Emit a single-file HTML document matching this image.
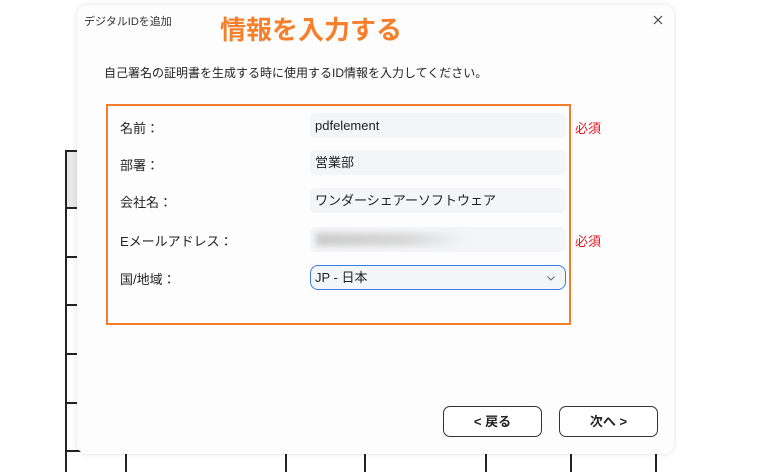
<!DOCTYPE html>
<html><head><meta charset="utf-8"><style>
body{margin:0;width:784px;height:472px;background:#fff;position:relative;overflow:hidden;font-family:"Liberation Sans","Noto Sans CJK JP",sans-serif;color:#222}
.a{position:absolute}
.vl{position:absolute;width:2px;background:#222}
.hl{position:absolute;height:2px;background:#222}
.dlg{position:absolute;left:77px;top:5px;width:597px;height:449px;background:#fdfdfd;border-radius:10px;box-shadow:0 0 6px rgba(0,0,0,.12)}
.lbl{position:absolute;left:120px;font-size:13px}
.in{position:absolute;left:310px;width:256px;height:25px;background:#f4f5f7;border-radius:5px;font-size:13px;line-height:25px;padding-left:5px;box-sizing:border-box}
.req{position:absolute;left:575px;color:#e8161c;font-size:13px}
.btn{position:absolute;top:406px;width:99px;height:31px;border:1px solid #333;border-radius:7px;box-sizing:border-box;text-align:center;line-height:29px;font-size:13px;font-weight:bold;background:#fff}
</style></head><body>
<div class="vl" style="left:65px;top:150px;height:322px"></div>
<div class="a" style="left:67px;top:152px;width:12px;height:55px;background:#e8e8e8"></div>
<div class="hl" style="left:65px;top:150px;width:14px"></div>
<div class="hl" style="left:65px;top:207px;width:14px"></div>
<div class="hl" style="left:65px;top:256px;width:14px"></div>
<div class="hl" style="left:65px;top:304px;width:14px"></div>
<div class="hl" style="left:65px;top:353px;width:14px"></div>
<div class="hl" style="left:65px;top:402px;width:14px"></div>
<div class="hl" style="left:65px;top:450px;width:16px"></div>
<div class="vl" style="left:125px;top:450px;height:22px"></div>
<div class="vl" style="left:285px;top:450px;height:22px"></div>
<div class="vl" style="left:364px;top:450px;height:22px"></div>
<div class="vl" style="left:485px;top:450px;height:22px"></div>
<div class="vl" style="left:570px;top:450px;height:22px"></div>
<div class="vl" style="left:655px;top:450px;height:22px"></div>
<div class="dlg"></div>
<div class="a" style="left:84px;top:13px;font-size:11px;color:#333">デジタルIDを追加</div>
<div class="a" style="left:220px;top:14px;font-size:26px;font-weight:bold;color:#f57f2a;line-height:32px">情報を入力する</div>
<svg class="a" style="left:653px;top:15px" width="10" height="10"><path d="M1 1L9 9M9 1L1 9" stroke="#444" stroke-width="1.2"/></svg>
<div class="a" style="left:104px;top:64px;font-size:12px">自己署名の証明書を生成する時に使用するID情報を入力してください。</div>
<div class="a" style="left:106px;top:104px;width:465px;height:221px;border:2px solid #f57c2a;box-sizing:border-box"></div>
<div class="lbl" style="top:118px">名前：</div>
<div class="lbl" style="top:155px">部署：</div>
<div class="lbl" style="top:192px">会社名：</div>
<div class="lbl" style="top:231px">Eメールアドレス：</div>
<div class="lbl" style="top:269px">国/地域：</div>
<div class="in" style="top:113px">pdfelement</div>
<div class="in" style="top:150px">営業部</div>
<div class="in" style="top:188px">ワンダーシェアーソフトウェア</div>
<div class="in" style="top:227px"><div style="position:absolute;left:6px;top:6px;width:150px;height:13px;background:linear-gradient(90deg,#ccc,#d8d8d8 60%,#f4f5f7);filter:blur(3px)"></div></div>
<div class="in" style="top:265px;border:1px solid #3b7de6;border-radius:8px;line-height:23px;padding-left:4px">JP - 日本<svg style="position:absolute;right:10px;top:10px" width="8" height="5"><path d="M0.5 0.5L4 4L7.5 0.5" stroke="#666" fill="none"/></svg></div>
<div class="req" style="top:118px">必須</div>
<div class="req" style="top:231px">必須</div>
<div class="btn" style="left:443px">&lt; 戻る</div>
<div class="btn" style="left:559px">次へ &gt;</div>
</body></html>
